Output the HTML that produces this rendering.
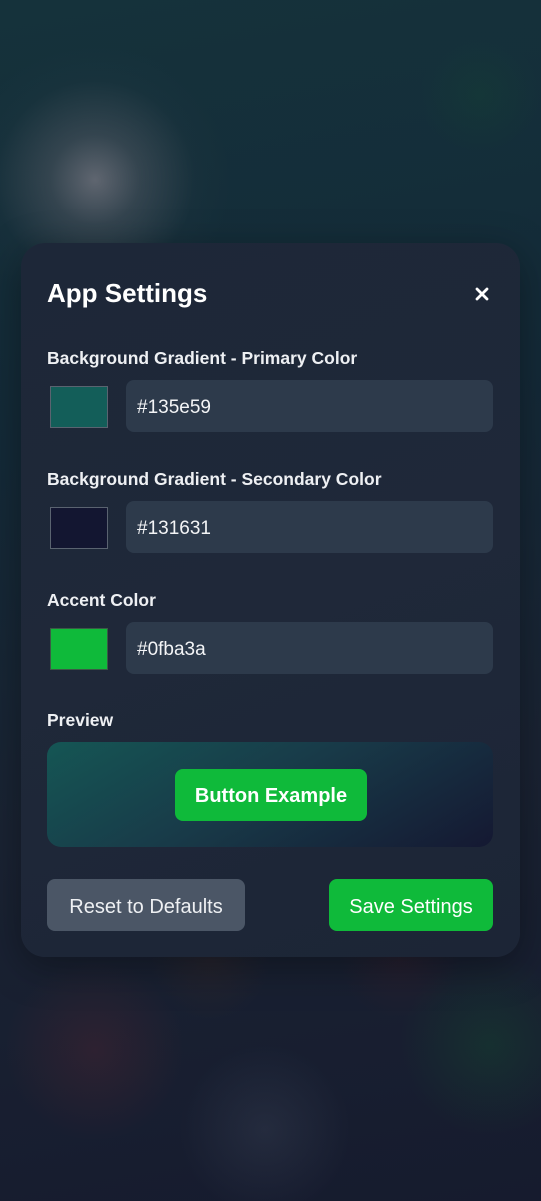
<!DOCTYPE html>
<html><head><meta charset="utf-8"><style>
*{box-sizing:border-box;margin:0;padding:0}
body{width:541px;height:1201px;overflow:hidden;position:relative;font-family:"Liberation Sans",sans-serif;color:#fff;
background:
radial-gradient(circle at 95px 180px,rgba(120,120,130,.75) 0,rgba(90,95,105,.45) 45px,rgba(40,60,70,.15) 100px,rgba(0,0,0,0) 135px),
radial-gradient(circle at 480px 95px,rgba(20,80,50,.22) 0,rgba(0,0,0,0) 60px),
radial-gradient(circle at 95px 1050px,rgba(110,40,50,.25) 0,rgba(0,0,0,0) 90px),
radial-gradient(circle at 490px 1045px,rgba(20,100,50,.25) 0,rgba(0,0,0,0) 90px),
radial-gradient(circle at 265px 1130px,rgba(75,85,105,.25) 0,rgba(0,0,0,0) 85px),
radial-gradient(circle at 210px 960px,rgba(90,50,30,.18) 0,rgba(0,0,0,0) 60px),
radial-gradient(circle at 400px 960px,rgba(90,30,40,.18) 0,rgba(0,0,0,0) 60px),
linear-gradient(170deg,#15323b 0%,#142a38 35%,#1a2333 65%,#161b2e 100%);}
.card{position:absolute;left:21px;top:243px;width:499px;height:714px;border-radius:24px;
background:linear-gradient(160deg,#1d2738 0%,#1f2839 50%,#1c2536 100%);box-shadow:0 10px 40px rgba(0,0,0,.35)}
.abs{position:absolute}
h1{position:absolute;left:26px;top:35px;font-size:26px;font-weight:bold}
.lbl{position:absolute;left:26px;font-size:17.5px;font-weight:bold;color:#eef0f3}
.sw{position:absolute;left:29px;width:58px;height:42px;border:1px solid #5a6370}
.inp{position:absolute;left:105px;width:367px;height:52px;border-radius:8px;background:#2d3a4b;font-size:19px;padding:17px 0 0 11px;color:#f3f4f6}
.btn{position:absolute;height:52px;border-radius:8px;font-size:20px;text-align:center;line-height:56px}
</style></head><body>
<div class="card">
<h1>App Settings</h1>
<svg class="abs" style="left:454px;top:44px" width="14" height="14" viewBox="0 0 14 14"><path d="M2 2L12 12M12 2L2 12" stroke="#fff" stroke-width="2.8" stroke-linecap="round"/></svg>
<div class="lbl" style="top:105px">Background Gradient - Primary Color</div>
<div class="sw" style="top:143px;background:#135e59"></div>
<div class="inp" style="top:137px">#135e59</div>
<div class="lbl" style="top:226px">Background Gradient - Secondary Color</div>
<div class="sw" style="top:264px;background:#131631"></div>
<div class="inp" style="top:258px">#131631</div>
<div class="lbl" style="top:347px">Accent Color</div>
<div class="sw" style="top:385px;background:#0fba3a;border-color:#3a5a45"></div>
<div class="inp" style="top:379px">#0fba3a</div>
<div class="lbl" style="top:467px">Preview</div>
<div class="abs" style="left:26px;top:499px;width:446px;height:105px;border-radius:14px;background:linear-gradient(150deg,#135e59 0%,#173f4c 45%,#131631 100%);opacity:.85"></div>
<div class="btn" style="left:154px;top:526px;width:192px;height:52px;background:#0fba3a;font-weight:bold;font-size:20px;line-height:54px">Button Example</div>
<div class="btn" style="left:26px;top:636px;width:198px;background:#4b5666;color:#eef0f3">Reset to Defaults</div>
<div class="btn" style="left:308px;top:636px;width:164px;background:#0fba3a">Save Settings</div>
</div>
</body></html>
